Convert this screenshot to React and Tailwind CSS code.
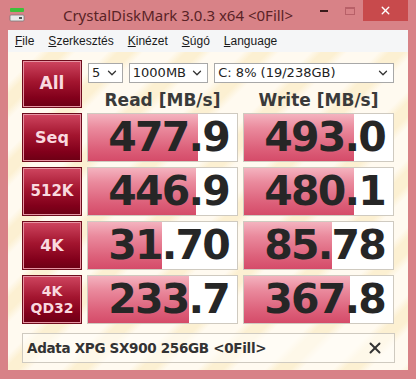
import { ChevronDown, X } from 'lucide-react'

const rows = [
  { label: ['Seq'], read: '477.9', readPct: 73.5, write: '493.0', writePct: 73.5, size: 'text-[16px]' },
  { label: ['512K'], read: '446.9', readPct: 72.8, write: '480.1', writePct: 73.5, size: 'text-[15px]' },
  { label: ['4K'], read: '31.70', readPct: 49.7, write: '85.78', writePct: 59, size: 'text-[16px]' },
  { label: ['4K', 'QD32'], read: '233.7', readPct: 67.5, write: '367.8', writePct: 70.9, size: 'text-[14px] leading-[17px]' },
]

const btnClass =
  'flex flex-col items-center justify-center border border-[#6e0c1c] shadow-[inset_0_0_0_1px_#e795a4] bg-[linear-gradient(to_bottom,#cf4660,#a3152f_45%,#82001b_80%,#6c0014)] text-[#f9d9df] font-bold'

const ValueBox = ({ value, pct }) => (
  <div className="relative bg-white border border-[#cfcac0] overflow-hidden">
    <div
      className="absolute left-0 top-0 bottom-0 bg-[linear-gradient(to_bottom,#f4b3bf,#ea8a9d_30%,#dc5f79_75%,#d54b69)]"
      style={{ width: pct + '%' }}
    ></div>
    <div className="relative h-full flex items-center justify-end pr-[8px] text-[41px] font-bold text-[#262626] tracking-[-1.8px] leading-none">
      {value}
    </div>
  </div>
)

const Combo = ({ text, w }) => (
  <div className={`${w} h-[20px] bg-white border border-[#a8a8a8] flex items-center justify-between pl-[3px] pr-[3px] text-[13px] text-[#222]`}>
    <span>{text}</span>
    <ChevronDown size={14} strokeWidth={2.2} className="text-[#333]" />
  </div>
)

const App = () => {
  return (
    <div
      className="w-[416px] h-[379px] bg-[#d88287] flex flex-col overflow-hidden"
      style={{ fontFamily: '"DejaVu Sans", Verdana, sans-serif' }}
    >
      {/* title bar */}
      <div className="h-[30px] flex items-start relative shrink-0">
        <svg width="16" height="16" viewBox="0 0 16 16" className="absolute left-[9px] top-[7px]">
          <rect x="1" y="1" width="14" height="4" rx="1" fill="#3fbf3a" />
          <rect x="1" y="8" width="14" height="6" rx="1" fill="#e9e9e9" stroke="#7a7a7a" strokeWidth="0.8" />
          <rect x="10" y="10" width="3" height="2" fill="#555" />
        </svg>
        <div
          className="flex-1 text-center pt-[4px] pr-[60px] text-[15px] text-[#5a2326]"
          style={{ fontFamily: '"Noto Sans", "Open Sans", sans-serif' }}
        >
          CrystalDiskMark 3.0.3 x64 &lt;0Fill&gt;
        </div>
        <div className="absolute right-[8px] top-0 flex items-start">
          <div className="w-[26px] h-[21px] flex items-center justify-center">
            <div className="w-[8px] h-[2px] bg-[#3a1a1a]"></div>
          </div>
          <div className="w-[26px] h-[21px] flex items-center justify-center">
            <div className="w-[10px] h-[8px] border border-[#b86068] border-t-2"></div>
          </div>
          <div className="w-[45px] h-[21px] bg-[#c84a4c] flex items-center justify-center">
            <X size={13} strokeWidth={2.6} className="text-white" />
          </div>
        </div>
      </div>

      <div className="mx-[8px] mb-[9px] flex-1 flex flex-col">
        {/* menu */}
        <div
          className="h-[22px] bg-[#f5f6f7] flex items-center gap-[14px] pl-[7px] text-[12px] text-[#1a1a1a]"
          style={{ fontFamily: '"Liberation Sans", Arial, sans-serif' }}
        >
          <span><u>F</u>ile</span>
          <span><u>S</u>zerkesztés</span>
          <span><u>K</u>inézet</span>
          <span><u>S</u>úgó</span>
          <span><u>L</u>anguage</span>
        </div>

        {/* client */}
        <div className="flex-1 bg-[repeating-linear-gradient(135deg,#fffaf0_0px,#fffaf0_22px,#fcf0d2_30px,#fcf0d2_40px,#fffaf0_48px)] pl-[14px] pt-[8px]">
          <div className="grid grid-cols-[60px_151px_151px] grid-rows-[48px_49px_49px_49px_49px] gap-x-[5px] gap-y-[5px]">
            <div className={`${btnClass} text-[17px]`}>All</div>
            <div className="col-span-2 flex flex-col">
              <div className="flex gap-[6px] mt-[3px] ml-[1px]">
                <Combo text="5" w="w-[35px]" />
                <Combo text="1000MB" w="w-[80px]" />
                <Combo text="C: 8% (19/238GB)" w="w-[181px]" />
              </div>
              <div className="flex mt-[5px] text-[17px] font-bold text-[#3a3a3a]">
                <div className="w-[151px] text-center">Read [MB/s]</div>
                <div className="w-[5px]"></div>
                <div className="w-[151px] text-center">Write [MB/s]</div>
              </div>
            </div>

            {rows.map((r) => (
              <div key={r.read} className="contents">
                <div className={`${btnClass} ${r.size}`}>
                  {r.label.map((l) => (
                    <span key={l}>{l}</span>
                  ))}
                </div>
                <ValueBox value={r.read} pct={r.readPct} />
                <ValueBox value={r.write} pct={r.writePct} />
              </div>
            ))}
          </div>

          <div className="mt-[9px] w-[373px] h-[30px] border border-[#cfcac0] bg-[#fffdf8]/60 flex items-center justify-between pl-[4px] pr-[10px] text-[13.5px] font-bold text-[#333] tracking-[-0.3px]">
            <span>Adata XPG SX900 256GB &lt;0Fill&gt;</span>
            <X size={18} strokeWidth={2.6} className="text-[#333]" />
          </div>
        </div>
      </div>
    </div>
  )
}

export default App
